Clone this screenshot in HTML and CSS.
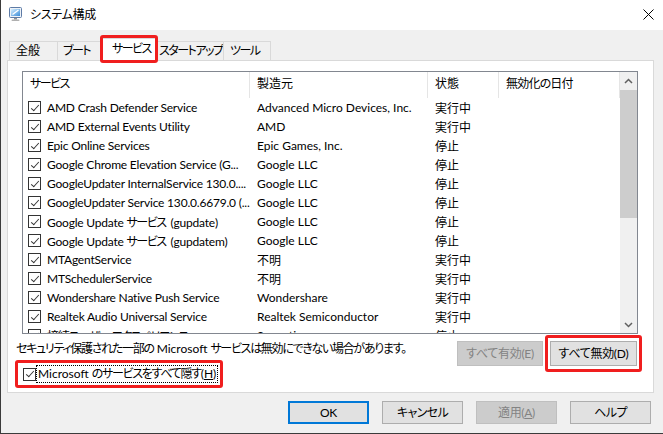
FILE: index.html
```html
<!DOCTYPE html>
<html lang="ja">
<head>
<meta charset="utf-8">
<title>システム構成</title>
<link rel="stylesheet" href="styles.css">
</head>
<body>
<div class="window">
  <header class="titlebar">
    <svg class="app-icon" width="16" height="16" viewBox="0 0 16 16">
      <defs>
        <linearGradient id="scr" x1="0" y1="0" x2="1" y2="1">
          <stop offset="0" stop-color="#d8f0ff"/>
          <stop offset="1" stop-color="#3a8cd8"/>
        </linearGradient>
      </defs>
      <rect x="1.5" y="1.5" width="12" height="10" rx="1" fill="#eef2f7" stroke="#5d7ba6"/>
      <rect x="3" y="3" width="9" height="7" fill="url(#scr)"/>
      <path d="M4.5 8.5 L10.5 4" stroke="#fff" stroke-width="1.3"/>
      <rect x="6" y="12" width="3" height="1.5" fill="#8f8f8f"/>
      <rect x="3.5" y="13.5" width="8" height="1.6" rx=".8" fill="#b0b0b0"/>
    </svg>
    <span class="title">システム構成</span>
    <svg class="close-icon" width="11" height="11" viewBox="0 0 11 11">
      <path d="M0.5 0.5 L10.5 10.5 M10.5 0.5 L0.5 10.5" stroke="#000" stroke-width="1" fill="none"/>
    </svg>
  </header>

  <main class="client">
    <nav class="tabs">
      <div class="tab tab--general">全般</div>
      <div class="tab tab--boot kana">ブート</div>
      <div class="tab tab--services is-active kana">サービス</div>
      <div class="tab tab--startup kana">スタートアップ</div>
      <div class="tab tab--tools kana">ツール</div>
    </nav>

    <section class="panel">
      <div class="listbox">
        <div class="listview">
          <div class="lv-header">
            <div class="col col-name"><span class="kana">サービス</span></div>
            <div class="col col-maker">製造元</div>
            <div class="col col-state">状態</div>
            <div class="col col-date">無効化の日付</div>
          </div>

          <div class="lv-row">
            <div class="col col-name"><span class="check"></span><span class="label">AMD Crash Defender Service</span></div>
            <div class="col col-maker">Advanced Micro Devices, Inc.</div>
            <div class="col col-state">実行中</div>
            <div class="col col-date"></div>
          </div>
          <div class="lv-row">
            <div class="col col-name"><span class="check"></span><span class="label">AMD External Events Utility</span></div>
            <div class="col col-maker">AMD</div>
            <div class="col col-state">実行中</div>
            <div class="col col-date"></div>
          </div>
          <div class="lv-row">
            <div class="col col-name"><span class="check"></span><span class="label">Epic Online Services</span></div>
            <div class="col col-maker">Epic Games, Inc.</div>
            <div class="col col-state">停止</div>
            <div class="col col-date"></div>
          </div>
          <div class="lv-row">
            <div class="col col-name"><span class="check"></span><span class="label">Google Chrome Elevation Service (G...</span></div>
            <div class="col col-maker">Google LLC</div>
            <div class="col col-state">停止</div>
            <div class="col col-date"></div>
          </div>
          <div class="lv-row">
            <div class="col col-name"><span class="check"></span><span class="label">GoogleUpdater InternalService 130.0....</span></div>
            <div class="col col-maker">Google LLC</div>
            <div class="col col-state">停止</div>
            <div class="col col-date"></div>
          </div>
          <div class="lv-row">
            <div class="col col-name"><span class="check"></span><span class="label">GoogleUpdater Service 130.0.6679.0 (...</span></div>
            <div class="col col-maker">Google LLC</div>
            <div class="col col-state">停止</div>
            <div class="col col-date"></div>
          </div>
          <div class="lv-row">
            <div class="col col-name"><span class="check"></span><span class="label">Google Update <span class="kana">サービス</span> (gupdate)</span></div>
            <div class="col col-maker">Google LLC</div>
            <div class="col col-state">停止</div>
            <div class="col col-date"></div>
          </div>
          <div class="lv-row">
            <div class="col col-name"><span class="check"></span><span class="label">Google Update <span class="kana">サービス</span> (gupdatem)</span></div>
            <div class="col col-maker">Google LLC</div>
            <div class="col col-state">停止</div>
            <div class="col col-date"></div>
          </div>
          <div class="lv-row">
            <div class="col col-name"><span class="check"></span><span class="label">MTAgentService</span></div>
            <div class="col col-maker">不明</div>
            <div class="col col-state">実行中</div>
            <div class="col col-date"></div>
          </div>
          <div class="lv-row">
            <div class="col col-name"><span class="check"></span><span class="label">MTSchedulerService</span></div>
            <div class="col col-maker">不明</div>
            <div class="col col-state">実行中</div>
            <div class="col col-date"></div>
          </div>
          <div class="lv-row">
            <div class="col col-name"><span class="check"></span><span class="label">Wondershare Native Push Service</span></div>
            <div class="col col-maker">Wondershare</div>
            <div class="col col-state">実行中</div>
            <div class="col col-date"></div>
          </div>
          <div class="lv-row">
            <div class="col col-name"><span class="check"></span><span class="label">Realtek Audio Universal Service</span></div>
            <div class="col col-maker">Realtek Semiconductor</div>
            <div class="col col-state">実行中</div>
            <div class="col col-date"></div>
          </div>
          <div class="lv-row">
            <div class="col col-name"><span class="check"></span><span class="label ja">接続ユーザー エクスペリエンス</span></div>
            <div class="col col-maker">Synaptics</div>
            <div class="col col-state">停止</div>
            <div class="col col-date"></div>
          </div>
        </div>

        <div class="scrollbar">
          <div class="sb-btn">
            <svg width="9" height="6" viewBox="0 0 9 6"><path d="M1 5 L4.5 1.5 L8 5" stroke="#606060" stroke-width="1.5" fill="none"/></svg>
          </div>
          <div class="sb-track"><div class="sb-thumb"></div></div>
          <div class="sb-btn">
            <svg width="9" height="6" viewBox="0 0 9 6"><path d="M1 1 L4.5 4.5 L8 1" stroke="#606060" stroke-width="1.5" fill="none"/></svg>
          </div>
        </div>
      </div>

      <div class="panel-footer">
        <div class="footer-left">
          <p class="note"><span class="ja">セキュリティ保護された一部の</span> Microsoft <span class="ja">サービスは無効にできない場合があります。</span></p>
          <label class="highlight hide-ms">
            <span class="check"></span>
            <span class="focus-text">Microsoft <span class="ja">のサービスをすべて隠す</span>(<u>H</u>)</span>
          </label>
        </div>
        <div class="footer-right">
          <button class="btn btn--wide" disabled>すべて有効(E)</button>
          <span class="highlight highlight--button">
            <button class="btn btn--wide btn--inner">すべて無効(D)</button>
          </span>
        </div>
      </div>
    </section>

    <footer class="dialog-buttons">
      <button class="btn btn--dialog btn--default">OK</button>
      <button class="btn btn--dialog"><span class="kana-soft">キャンセル</span></button>
      <button class="btn btn--dialog" disabled>適用(<u>A</u>)</button>
      <button class="btn btn--dialog"><span class="kana-soft">ヘルプ</span></button>
    </footer>
  </main>
</div>
</body>
</html>
```

FILE: styles.css
```css
* {
  box-sizing: border-box;
  margin: 0;
  padding: 0;
}

html,
body {
  width: 663px;
  height: 434px;
  overflow: hidden;
  background: #f0f0f0;
}

body {
  font-family: "Lato", "Noto Sans CJK JP", sans-serif;
  font-size: 12px;
  color: #000;
  font-feature-settings: "palt";
}

/* condensed Japanese runs (UI font kana are narrow) */
.kana { letter-spacing: -1.5px; }
.ja { letter-spacing: -1.3px; }
.kana-soft { letter-spacing: -0.6px; }

.window {
  width: 663px;
  height: 434px;
  border-left: 1px solid #3b3b3b;
  border-bottom: 1px solid #3b3b3b;
  background: #f0f0f0;
  display: flex;
  flex-direction: column;
}

/* ---------- title bar ---------- */
.titlebar {
  height: 30px;
  flex: none;
  background: #fff;
  display: flex;
  align-items: center;
  padding: 0 9px 0 7px;
}

.app-icon {
  flex: none;
  margin-top: -2px;
}

.title {
  flex: 1;
  margin-left: 6px;
  line-height: 16px;
  letter-spacing: -0.3px;
}

.close-icon {
  flex: none;
  margin-top: -1px;
}

/* ---------- client ---------- */
.client {
  flex: 1;
  display: flex;
  flex-direction: column;
  padding-left: 6px;
}

/* ---------- tabs ---------- */
.tabs {
  height: 30px;
  flex: none;
  display: flex;
  align-items: flex-end;
  padding-left: 2px;
  position: relative;
  z-index: 2;
}

.tab {
  height: 19px;
  margin-right: -1px;
  border: 1px solid #d9d9d9;
  border-bottom: none;
  background: #f0f0f0;
  padding-left: 6px;
  line-height: 17px;
  white-space: nowrap;
}

.tab--general { width: 49px; }
.tab--boot { width: 47px; padding-left: 5px; }
.tab--startup { width: 69px; padding-left: 3px; }
.tab--tools { width: 48px; padding-left: 6px; }

.tab--services {
  width: 53px;
}

.tab.is-active {
  width: 57px;
  height: 23px;
  margin: 0 -3px -1px -2px;
  background: #fff;
  padding-left: 10px;
  line-height: 19px;
  position: relative;
  z-index: 1;
}

.tab.is-active::after {
  content: "";
  position: absolute;
  left: -2px;
  right: -1px;
  top: -4px;
  bottom: -2px;
  border: 3px solid #f01e1e;
  border-radius: 3px;
}

/* ---------- panel ---------- */
.panel {
  width: 647px;
  height: 333px;
  flex: none;
  border: 1px solid #d9d9d9;
  background: #fff;
  padding-top: 10px;
  display: flex;
  flex-direction: column;
}

.listbox {
  width: 616px;
  height: 263px;
  margin-left: 14px;
  border: 1px solid #828790;
  background: #fff;
  display: flex;
  flex: none;
}

.listview {
  flex: 1;
  overflow: hidden;
}

.lv-header {
  height: 26px;
  display: flex;
}

.lv-header .col {
  border-right: 1px solid #e5e5e5;
  line-height: 24px;
}

.lv-header .col-date {
  letter-spacing: -0.8px;
}

.lv-row {
  height: 19px;
  display: flex;
  align-items: center;
}

.col {
  flex: none;
  padding-left: 7px;
  white-space: nowrap;
  overflow: hidden;
}

.col-name { width: 227px; }
.col-maker { width: 178px; }
.col-state { width: 71px; }
.col-date { width: 121px; }

.lv-row .col-name {
  display: flex;
  align-items: center;
  padding-left: 5px;
}

.lv-row .label {
  margin-left: 6px;
  letter-spacing: -0.2px;
}

.lv-row .label .kana {
  letter-spacing: -1.5px;
  margin-right: 2px;
}

.lv-row .label.ja {
  letter-spacing: -1.3px;
}

.check {
  flex: none;
  width: 13px;
  height: 13px;
  border: 1px solid #333;
  background: #fff;
  position: relative;
  display: inline-block;
}

.check::after {
  content: "";
  position: absolute;
  left: 3.5px;
  top: 0.5px;
  width: 3px;
  height: 7px;
  border-right: 1px solid #333;
  border-bottom: 1px solid #333;
  transform: rotate(42deg);
}

/* scrollbar */
.scrollbar {
  width: 17px;
  flex: none;
  background: #f0f0f0;
  display: flex;
  flex-direction: column;
}

.sb-btn {
  height: 17px;
  flex: none;
  display: flex;
  align-items: center;
  justify-content: center;
}

.sb-track {
  flex: 1;
}

.sb-thumb {
  margin-top: 1px;
  height: 128px;
  background: #cdcdcd;
}

/* footer of panel */
.panel-footer {
  display: flex;
  padding: 0 11px 0 7px;
}

.footer-left {
  flex: 1;
  display: flex;
  flex-direction: column;
  align-items: flex-start;
}

.note {
  margin-top: 7px;
  padding-left: 1px;
  line-height: 16px;
  white-space: nowrap;
}

.highlight {
  border: 3px solid #f01e1e;
  border-radius: 3px;
}

.hide-ms {
  margin-top: 3px;
  width: 208px;
  height: 28px;
  display: flex;
  align-items: center;
  padding-left: 5px;
}

.focus-text {
  outline: 1px dotted #000;
  outline-offset: 0;
  padding: 0 1px;
  line-height: 16px;
  margin-left: 1px;
  white-space: nowrap;
}

.footer-right {
  display: flex;
  align-items: flex-start;
  gap: 2px;
}

.footer-right > .btn {
  margin-top: 7px;
}

.highlight--button {
  margin-top: 1px;
  padding: 3px 2px;
  display: flex;
}

/* buttons */
.btn {
  font: inherit;
  font-feature-settings: "palt";
  color: #000;
  background: #e1e1e1;
  border: 1px solid #adadad;
  height: 25px;
  line-height: 1;
  white-space: nowrap;
  letter-spacing: -0.3px;
}

.btn--wide { width: 86px; }
.btn--inner { width: 87px; }

.btn:disabled {
  background: #cccccc;
  border-color: #bfbfbf;
  color: #838383;
}

.dialog-buttons {
  margin-top: 8px;
  display: flex;
  justify-content: flex-end;
  gap: 13px;
  padding-right: 12px;
}

.btn--dialog {
  width: 81px;
  height: 23px;
}

.btn--default {
  border: 2px solid #0078d7;
}
```
